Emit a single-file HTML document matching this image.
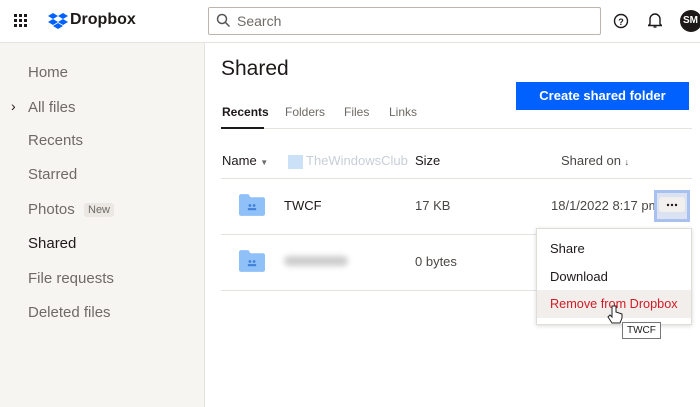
<!DOCTYPE html><html><head><style>
*{margin:0;padding:0;box-sizing:border-box}
body{width:700px;height:407px;overflow:hidden;background:#fff;font-family:"Liberation Sans",sans-serif;position:relative;color:#1e1919}
.a{position:absolute;white-space:nowrap}
.side{position:absolute;left:0;top:43px;width:205px;height:364px;background:#f7f5f2;border-right:1px solid #e6e3df}
.nav{position:absolute;left:28px;font-size:15px;color:#6e6a66}
.hr{position:absolute;height:1px;background:#e6e3df}
.fold{position:absolute;width:26px;height:22px}
</style></head><body>
<div class="hr" style="left:0;top:42px;width:700px"></div>
<svg class="a" style="left:14px;top:14px" width="14" height="14"><g fill="#1e1919"><rect x="0" y="0" width="3" height="3"/><rect x="5" y="0" width="3" height="3"/><rect x="10" y="0" width="3" height="3"/><rect x="0" y="5" width="3" height="3"/><rect x="5" y="5" width="3" height="3"/><rect x="10" y="5" width="3" height="3"/><rect x="0" y="10" width="3" height="3"/><rect x="5" y="10" width="3" height="3"/><rect x="10" y="10" width="3" height="3"/></g></svg>
<svg class="a" style="left:48px;top:13px" width="20" height="17" viewBox="0 0 20 17"><g fill="#0061fe"><path d="M5 0l5 3-5 3-5-3z"/><path d="M15 0l5 3-5 3-5-3z"/><path d="M5 6l5 3-5 3-5-3z"/><path d="M15 6l5 3-5 3-5-3z"/><path d="M10 10l5 3-5 3-5-3z"/></g></svg>
<div class="a" style="left:70px;top:11px;font-size:16px;font-weight:bold;color:#1e1919">Dropbox</div>
<div class="a" style="left:208px;top:7px;width:393px;height:28px;border:1px solid #bbb5ae;border-radius:2px"></div>
<svg class="a" style="left:216px;top:13px" width="14" height="15"><circle cx="6" cy="6" r="4.5" fill="none" stroke="#555" stroke-width="1.5"/><path d="M9.5 9.5l4 4" stroke="#555" stroke-width="1.5"/></svg>
<div class="a" style="left:237px;top:13px;font-size:14px;color:#6e6a66">Search</div>
<svg class="a" style="left:613px;top:13px" width="16" height="16"><circle cx="8" cy="8" r="6.5" fill="none" stroke="#1e1919" stroke-width="1.4"/><text x="8" y="12" font-size="9" text-anchor="middle" font-family="Liberation Sans" font-weight="bold" fill="#1e1919">?</text></svg>
<svg class="a" style="left:648px;top:12px" width="14" height="17"><path d="M2 12V7a5 5 0 0 1 10 0v5l1.5 1.5h-13z" fill="none" stroke="#1e1919" stroke-width="1.4"/><path d="M5.5 15h3" stroke="#1e1919" stroke-width="1.4"/></svg>
<div class="a" style="left:680px;top:10px;width:22px;height:22px;border-radius:50%;background:#1e1919;color:#fff;font-size:10px;font-weight:bold;line-height:22px;padding-left:3px">SM</div>
<div class="side"></div>
<div class="nav" style="top:64px">Home</div>
<div class="a" style="left:11px;top:98px;font-size:14px;color:#1e1919">›</div>
<div class="nav" style="top:99px">All files</div>
<div class="nav" style="top:132px">Recents</div>
<div class="nav" style="top:166px">Starred</div>
<div class="nav" style="top:201px">Photos</div>
<div class="a" style="left:84px;top:203px;font-size:11px;color:#6e6a66;background:#ebe8e4;padding:1px 4px;border-radius:3px">New</div>
<div class="nav" style="top:235px;color:#1e1919">Shared</div>
<div class="nav" style="top:270px">File requests</div>
<div class="nav" style="top:304px">Deleted files</div>
<div class="a" style="left:221px;top:57px;font-size:21px">Shared</div>
<div class="a" style="left:222px;top:105px;font-size:12px;font-weight:bold">Recents</div>
<div class="a" style="left:285px;top:105px;font-size:12px;color:#6e6a66">Folders</div>
<div class="a" style="left:344px;top:105px;font-size:12px;color:#6e6a66">Files</div>
<div class="a" style="left:389px;top:105px;font-size:12px;color:#6e6a66">Links</div>
<div class="hr" style="left:221px;top:128px;width:471px"></div>
<div class="a" style="left:221px;top:127px;width:43px;height:2px;background:#1e1919"></div>
<div class="a" style="left:516px;top:82px;width:173px;height:28px;background:#0061fe;color:#fff;font-size:13px;font-weight:bold;text-align:center;line-height:28px">Create shared folder</div>
<div class="a" style="left:222px;top:153px;font-size:13px">Name <span style="font-size:8px;color:#6e6a66">▼</span></div>
<div class="a" style="left:288px;top:155px;width:15px;height:14px;background:#b5d4f5;opacity:.7"></div>
<div class="a" style="left:306px;top:153px;font-size:13px;color:#c8ced8">TheWindowsClub</div>
<div class="a" style="left:415px;top:153px;font-size:13px">Size</div>
<div class="a" style="left:561px;top:153px;font-size:13px;color:#4a4744">Shared on <span style="font-size:9px">↓</span></div>
<div class="hr" style="left:221px;top:178px;width:471px"></div>
<div class="hr" style="left:221px;top:234px;width:471px"></div>
<div class="hr" style="left:221px;top:290px;width:315px"></div>
<svg class="fold" style="left:239px;top:194px" viewBox="0 0 25 21"><path d="M0 2a2 2 0 0 1 2-2h7l2 3h12a2 2 0 0 1 2 2v14a2 2 0 0 1-2 2H2a2 2 0 0 1-2-2z" fill="#8fc1f8"/><g fill="#3f7fd6"><circle cx="10.5" cy="11" r="1.3"/><circle cx="14.5" cy="11" r="1.3"/><rect x="8.5" y="13.5" width="4" height="2"/><rect x="12.5" y="13.5" width="4" height="2"/></g></svg>
<svg class="fold" style="left:239px;top:250px" viewBox="0 0 25 21"><path d="M0 2a2 2 0 0 1 2-2h7l2 3h12a2 2 0 0 1 2 2v14a2 2 0 0 1-2 2H2a2 2 0 0 1-2-2z" fill="#8fc1f8"/><g fill="#3f7fd6"><circle cx="10.5" cy="11" r="1.3"/><circle cx="14.5" cy="11" r="1.3"/><rect x="8.5" y="13.5" width="4" height="2"/><rect x="12.5" y="13.5" width="4" height="2"/></g></svg>
<div class="a" style="left:284px;top:198px;font-size:13px">TWCF</div>
<div class="a" style="left:284px;top:256px;width:64px;height:10px;background:#ccc;border-radius:5px;filter:blur(3px)"></div>
<div class="a" style="left:415px;top:198px;font-size:13px;color:#4a4744">17 KB</div>
<div class="a" style="left:415px;top:254px;font-size:13px;color:#4a4744">0 bytes</div>
<div class="a" style="left:551px;top:198px;font-size:13px;color:#4a4744">18/1/2022 8:17 pm</div>
<div class="a" style="left:654px;top:190px;width:36px;height:32px;border:3px solid #a9c1ee;background:#dbe3f3"></div>
<div class="a" style="left:659px;top:197px;width:26px;height:15px;background:#f2f0ee;border-radius:3px"></div>
<svg class="a" style="left:659px;top:197px" width="26" height="15"><g fill="#1e1919"><circle cx="9" cy="8" r="1.2"/><circle cx="13" cy="8" r="1.2"/><circle cx="17" cy="8" r="1.2"/></g></svg>
<div class="a" style="left:536px;top:228px;width:156px;height:97px;background:#fff;border:1px solid #e0ddd9;box-shadow:0 1px 4px rgba(0,0,0,.15)"></div>
<div class="a" style="left:550px;top:241px;font-size:13px">Share</div>
<div class="a" style="left:550px;top:269px;font-size:13px">Download</div>
<div class="a" style="left:537px;top:290px;width:154px;height:28px;background:#f1eeeb"></div>
<div class="a" style="left:550px;top:297px;font-size:12.7px;color:#d21b26">Remove from Dropbox</div>
<div class="a" style="left:622px;top:322px;border:1px solid #777;background:#fff;font-size:10px;padding:2px 4px">TWCF</div>
<svg class="a" style="left:607px;top:305px" width="16" height="22"><path d="M5 1v11l-2-2-2 2 4 6h8l2-5V9l-3-1-3-1V1z" fill="#fff" stroke="#222" stroke-width="1"/></svg>
</body></html>
